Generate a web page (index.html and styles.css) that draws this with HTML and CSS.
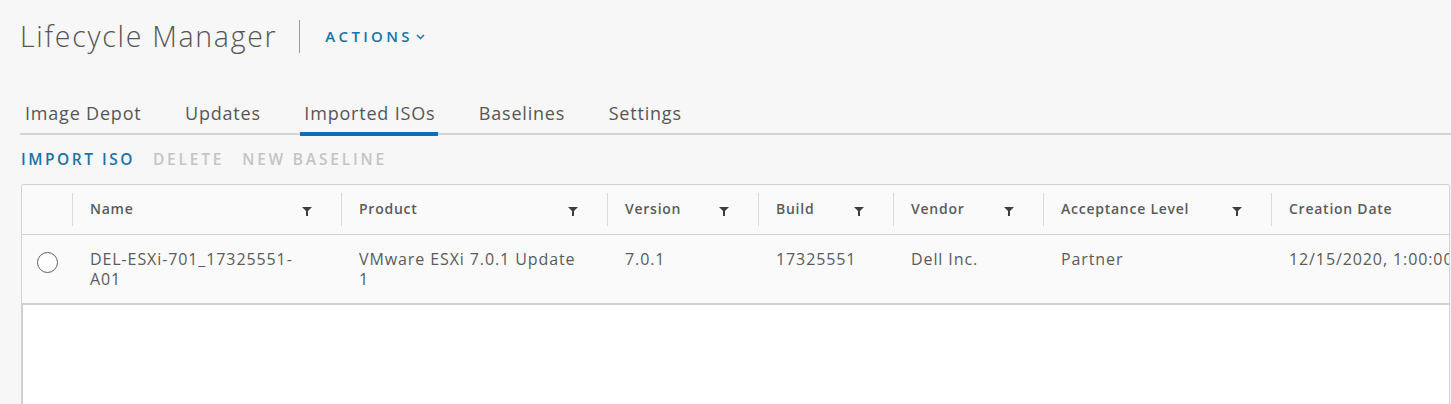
FILE: index.html
```html
<!DOCTYPE html>
<html>
<head>
<meta charset="utf-8">
<link rel="stylesheet" href="styles.css">
</head>
<body>
<div class="page">
  <header class="head">
    <h1 class="title">Lifecycle Manager</h1>
    <span class="vsep"></span>
    <button class="actions">ACTIONS
      <svg class="chev" width="9" height="6" viewBox="0 0 9 6"><path d="M1 1 L4.5 4.5 L8 1" fill="none" stroke="#1a73a8" stroke-width="1.5"/></svg>
    </button>
  </header>

  <nav class="tabs">
    <span class="tab">Image Depot</span>
    <span class="tab">Updates</span>
    <span class="tab active">Imported ISOs</span>
    <span class="tab">Baselines</span>
    <span class="tab">Settings</span>
  </nav>

  <div class="toolbar">
    <span class="tbtn enabled">IMPORT ISO</span>
    <span class="tbtn">DELETE</span>
    <span class="tbtn">NEW BASELINE</span>
  </div>

  <div class="grid">
    <div class="row header">
      <div class="cell sel"></div>
      <div class="cell"><span>Name</span><svg class="filter" viewBox="0 0 10 9"><path d="M0 0 H10 L6 4 V9 H4 V4 Z" fill="#3d3d3d"/></svg></div>
      <div class="cell"><span>Product</span><svg class="filter" viewBox="0 0 10 9"><path d="M0 0 H10 L6 4 V9 H4 V4 Z" fill="#3d3d3d"/></svg></div>
      <div class="cell"><span>Version</span><svg class="filter" viewBox="0 0 10 9"><path d="M0 0 H10 L6 4 V9 H4 V4 Z" fill="#3d3d3d"/></svg></div>
      <div class="cell"><span>Build</span><svg class="filter" viewBox="0 0 10 9"><path d="M0 0 H10 L6 4 V9 H4 V4 Z" fill="#3d3d3d"/></svg></div>
      <div class="cell"><span>Vendor</span><svg class="filter" viewBox="0 0 10 9"><path d="M0 0 H10 L6 4 V9 H4 V4 Z" fill="#3d3d3d"/></svg></div>
      <div class="cell"><span>Acceptance Level</span><svg class="filter" viewBox="0 0 10 9"><path d="M0 0 H10 L6 4 V9 H4 V4 Z" fill="#3d3d3d"/></svg></div>
      <div class="cell last"><span>Creation Date</span></div>
    </div>
    <div class="row data">
      <div class="cell sel"><span class="radio"></span></div>
      <div class="cell"><span class="txt name">DEL-ESXi-701_17325551-A01</span></div>
      <div class="cell"><span class="txt product">VMware ESXi 7.0.1 Update 1</span></div>
      <div class="cell"><span class="txt">7.0.1</span></div>
      <div class="cell"><span class="txt">17325551</span></div>
      <div class="cell"><span class="txt">Dell Inc.</span></div>
      <div class="cell"><span class="txt">Partner</span></div>
      <div class="cell last"><span class="txt nowrap">12/15/2020, 1:00:00</span></div>
    </div>
    <div class="empty"></div>
  </div>
</div>
</body>
</html>
```

FILE: styles.css
```css
* { box-sizing: border-box; }
html, body {
  margin: 0;
  padding: 0;
  background: #f7f7f7;
  font-family: "Open Sans", "Liberation Sans", sans-serif;
  color: #565656;
  overflow: hidden;
}
.page {
  padding: 16px 0 0 20px;
  width: 1451px;
  height: 404px;
}
.head {
  display: flex;
  align-items: center;
  height: 40px;
}
.title {
  margin: 0;
  font-weight: 300;
  font-size: 28.5px;
  color: #555;
  letter-spacing: 1.72px;
}
.vsep {
  width: 1px;
  height: 33px;
  background: #9a9a9a;
  margin: 0 25px 0 22px;
}
.actions {
  border: 0;
  background: none;
  padding: 0;
  font-family: inherit;
  font-weight: 600;
  font-size: 15px;
  letter-spacing: 3.3px;
  color: #1a73a8;
  display: flex;
  align-items: center;
  gap: 3px;
}
.chev { margin-top: 1px; }

.tabs {
  margin-top: 42px;
  display: flex;
  border-bottom: 2px solid #d4d4d4;
  padding-left: 5px;
  height: 37px;
}
.tab {
  font-size: 18px;
  letter-spacing: 0.8px;
  color: #565656;
  margin-right: 43.5px;
  padding: 2px 0 0;
  position: relative;
  line-height: 26px;
}
.tab.active::after {
  content: "";
  position: absolute;
  left: -4px;
  right: -3px;
  bottom: -3px;
  height: 4px;
  background: #0f6db3;
}

.toolbar {
  display: flex;
  gap: 18px;
  height: 49px;
  align-items: center;
  padding-left: 1px;
  padding-bottom: 2px;
}
.tbtn {
  font-size: 15.5px;
  font-weight: 600;
  letter-spacing: 2.8px;
  color: #c4c4c4;
}
.tbtn.enabled { color: #1a73a8; letter-spacing: 2.5px; }

.grid {
  margin-left: 1px;
  width: 1429px;
  border: 1px solid #d2d2d2;
  border-bottom: 0;
  border-radius: 3px 3px 0 0;
  overflow: hidden;
  height: 220px;
}
.row {
  display: grid;
  grid-template-columns: 51px 269px 266px 151px 135px 150px 228px 1fr;
  background: #fafafa;
}
.header {
  height: 50px;
  border-bottom: 1px solid #d0d0d0;
}
.header .cell {
  display: flex;
  align-items: center;
  justify-content: space-between;
  padding: 0 29px 2px 17px;
  font-size: 14px;
  font-weight: 600;
  letter-spacing: 0.75px;
  color: #5b5b5b;
  border-right: 1px solid #dadada;
  margin: 8px 0 8px;
}
.header .cell.sel { padding: 0; }
.header .cell.last { border-right: 0; }
.filter {
  width: 10px;
  height: 9px;
  margin-top: 6px;
  flex: none;
}
.data {
  height: 70px;
  border-bottom: 2px solid #cfcfcf;
}
.data .cell {
  padding: 14px 10px 0 17px;
  font-size: 16px;
  letter-spacing: 0.9px;
  line-height: 20px;
  color: #5b5b5b;
  overflow: hidden;
}
.data .cell.sel {
  padding: 17px 0 0 15px;
}
.radio {
  display: block;
  width: 21px;
  height: 21px;
  border: 1.5px solid #5e5e5e;
  border-radius: 50%;
  background: #fff;
}
.txt.name { display: block; width: 212px; }
.txt.product { display: block; width: 222px; }
.nowrap { white-space: nowrap; }
.empty {
  background: #fff;
  height: 100px;
  border-left: 1px solid #cfcfcf;
}
```
